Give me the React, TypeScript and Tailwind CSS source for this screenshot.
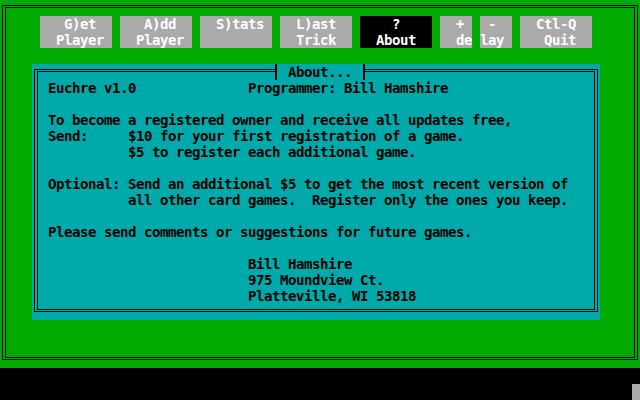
import React from "react";

type Btn = { l1: string; l2: string; w: string; dark?: boolean };

const buttons: Btn[] = [
  { l1: "   G)et", l2: "  Player", w: "w-[72px]" },
  { l1: "   A)dd", l2: "  Player", w: "w-[72px]" },
  { l1: "  S)tats", l2: "", w: "w-[72px]" },
  { l1: "  L)ast", l2: "  Trick", w: "w-[72px]" },
  { l1: "    ?", l2: "  About", w: "w-[72px]", dark: true },
  { l1: "  +", l2: "  de", w: "w-[32px]" },
  { l1: " -", l2: "lay", w: "w-[32px]" },
  { l1: "  Ctl-Q", l2: "   Quit", w: "w-[72px]" },
];

const lines: string[] = [
  "Euchre v1.0              Programmer: Bill Hamshire",
  "",
  "To become a registered owner and receive all updates free,",
  "Send:     $10 for your first registration of a game.",
  "          $5 to register each additional game.",
  "",
  "Optional: Send an additional $5 to get the most recent version of",
  "          all other card games.  Register only the ones you keep.",
  "",
  "Please send comments or suggestions for future games.",
  "",
  "                         Bill Hamshire",
  "                         975 Moundview Ct.",
  "                         Platteville, WI 53818",
];

export default function App() {
  return (
    <div className="w-[640px] h-[400px] bg-black flex flex-col font-['DejaVu_Sans_Mono','Liberation_Mono',monospace] text-[14px] leading-[16px] tracking-[-0.43px] font-bold">
      <div className="h-[368px] bg-[#00AA00] pt-[5px] px-[2px] pb-[8px]">
        <div className="h-full border border-black pt-px px-[2px] pb-px">
          <div className="h-full border border-black">
            <div className="flex gap-2 mt-2 ml-[34px]">
              {buttons.map((b, i) => (
                <div
                  key={i}
                  className={`${b.w} h-8 whitespace-pre text-white ${b.dark ? "bg-black" : "bg-[#AAAAAA]"}`}
                >
                  <div className="h-4">{b.l1}</div>
                  <div className="h-4">{b.l2}</div>
                </div>
              ))}
            </div>
            <div className="relative mt-4 ml-[26px] w-[568px] h-[256px] bg-[#00AAAA] pt-[5px] px-[2px] pb-[8px]">
              <div className="h-full border border-black pt-px px-[2px] pb-px">
                <div className="h-full border border-black pt-2 pl-[10px] text-black whitespace-pre">
                  {lines.map((t, i) => (
                    <div key={i} className="h-4">
                      {t}
                    </div>
                  ))}
                </div>
              </div>
              <div className="absolute left-[243px] top-0 w-[90px] h-4 bg-[#00AAAA] border-x-2 border-black pl-[11px] text-black whitespace-pre">
                About...
              </div>
            </div>
          </div>
        </div>
      </div>
      <div className="flex-1 flex justify-end items-end">
        <div className="w-2 h-4 bg-[#AAAAAA]" />
      </div>
    </div>
  );
}
